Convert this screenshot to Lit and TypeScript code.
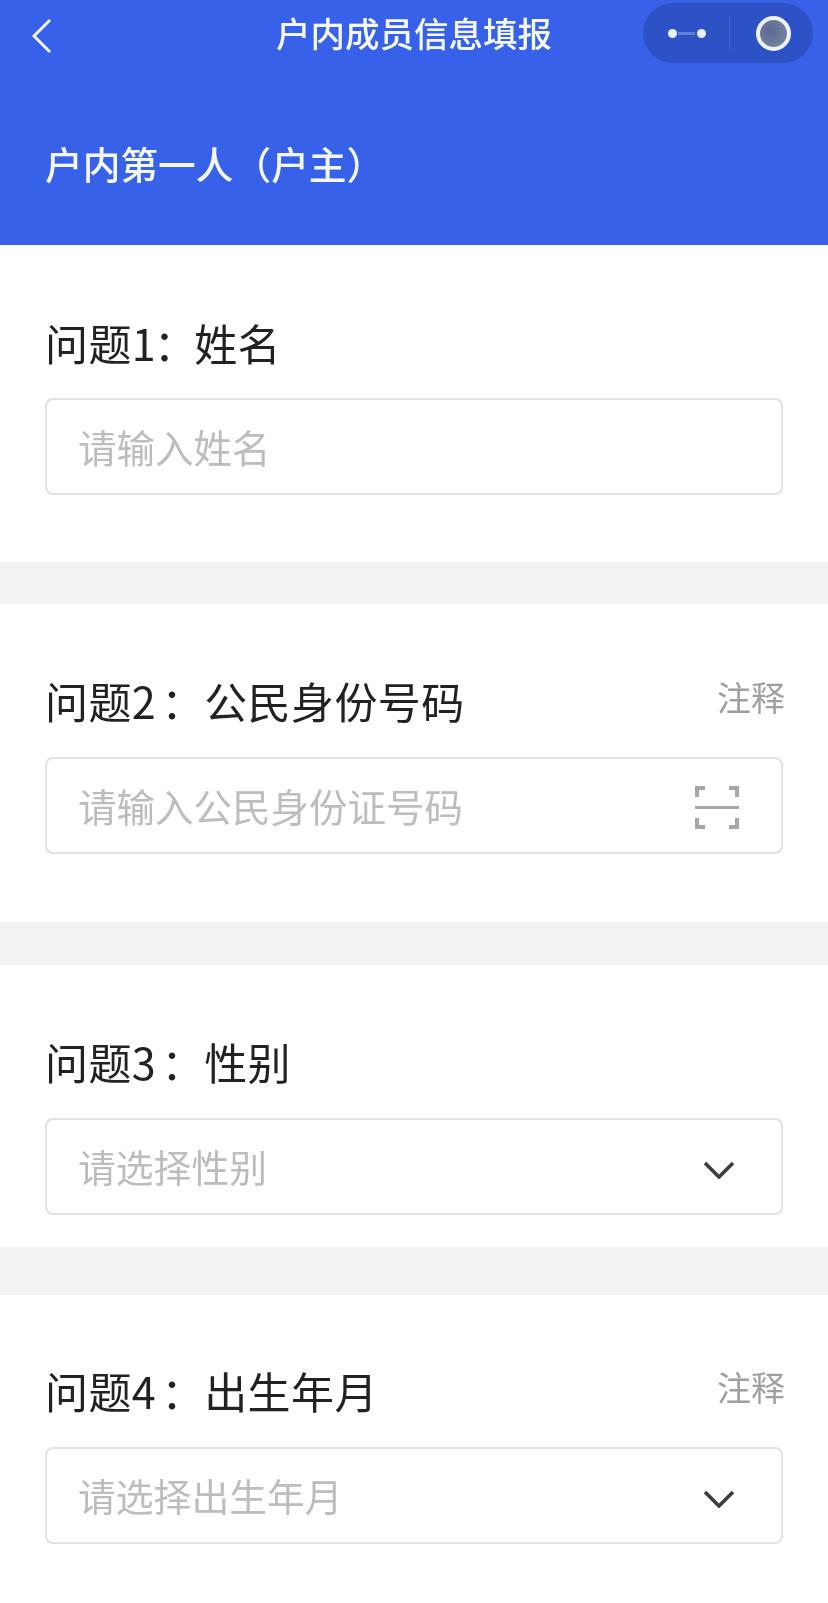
import { LitElement, html, css, svg } from "lit";
import { customElement } from "lit/decorators.js";

const chevron = svg`<svg class="ico-chev" viewBox="0 0 32 18" width="32" height="18" fill="none"><path d="M2 2 L16 16 L30 2" stroke="#3d3d3d" stroke-width="3.6"/></svg>`;
const scan = svg`<svg class="ico-scan" viewBox="0 0 44 43" width="44" height="43" fill="none" stroke="#a6a6a6" stroke-width="4">
  <path d="M2 11 V2 H10"/><path d="M34 2 H42 V11"/><path d="M2 32 V41 H10"/><path d="M34 41 H42 V32"/>
  <path d="M0 21.5 H44" stroke-width="3"/></svg>`;

@customElement("app-root")
export class AppRoot extends LitElement {
  static styles = css`
    :host {
      display: block;
      width: 828px;
      height: 1603px;
      background: #fff;
      overflow: hidden;
      font-family: "Noto Sans CJK SC", "Liberation Sans", sans-serif;
      filter: blur(0.55px);
    }
    .head {
      position: relative;
      height: 245px;
      box-sizing: border-box;
      background: #3761e8;
      color: #f4f7ff;
      display: flex;
      flex-direction: column;
    }
    .nav {
      height: 68px;
      display: flex;
      align-items: center;
      justify-content: center;
      font-size: 34.5px;
      font-weight: 500;
      line-height: 62px;
    }
    .nav span { display: block; margin-top: -4px; }
    .back { position: absolute; left: 31px; top: 18px; }
    .capsule {
      position: absolute;
      left: 643px;
      top: 3px;
      width: 170px;
      height: 60px;
      border-radius: 30px;
      background: #2d52c6;
      display: flex;
      align-items: center;
    }
    .dots {
      position: relative;
      width: 85px;
      display: flex;
      justify-content: center;
      gap: 20px;
      margin-left: 1px;
    }
    .dots::before {
      content: "";
      position: absolute;
      left: 34px;
      right: 34px;
      top: 3px;
      height: 3px;
      background: #5f7fdd;
    }
    .dot { position: relative; width: 9px; height: 9px; border-radius: 50%; background: #e8eeff; }
    .sep { width: 1px; height: 34px; background: #3f63d2; }
    .ring-wrap { flex: 1; display: flex; justify-content: center; padding-left: 3px; }
    .ring {
      width: 27px;
      height: 27px;
      border: 4px solid #eef3ff;
      border-radius: 50%;
      background: radial-gradient(circle at 40% 40%, #59688f, #7f8cab);
    }
    .sub {
      margin: 66px 0 0 45px;
      font-size: 37.7px;
      font-weight: 500;
      line-height: 58px;
      white-space: nowrap;
    }
    .sec { padding: 69px 45px 68px 45px; }
    .sec.first { padding-top: 70px; padding-bottom: 67px; }
    .sec.tight { padding-bottom: 32px; }
    .sec.last { padding-top: 68px; padding-bottom: 0; }
    .band { height: 42px; background: #f2f2f2; }
    .band.mid { height: 43px; }
    .band.wide { height: 48px; }
    .row {
      height: 60px;
      display: flex;
      justify-content: space-between;
      align-items: flex-start;
      margin-bottom: 24px;
    }
    .first .row { margin-bottom: 23px; }
    .q {
      font-size: 43px;
      line-height: 54px;
      color: #222;
      white-space: nowrap;
      letter-spacing: 0.4px;
    }
    .num { letter-spacing: 5.5px; }
    .colon { letter-spacing: 0; }
    .first .q { line-height: 55px; }
    .first .num { letter-spacing: -2px; }
    .first .colon { letter-spacing: -2.5px; }
    .note {
      font-size: 34px;
      line-height: 47px;
      color: #a0a0a0;
      margin-right: -2px;
    }
    .field {
      height: 97px;
      box-sizing: border-box;
      border: 2px solid #e2e2e2;
      border-radius: 8px;
      display: flex;
      align-items: center;
      justify-content: space-between;
      padding: 0 30px 0 31px;
    }
    .ph {
      font-size: 38.5px;
      line-height: 54px;
      margin-top: -1px;
      color: #bdbdbd;
      white-space: nowrap;
    }
    .ph.sel { font-size: 37.8px; }
    .ico-scan { display: block; margin: 3px 12px 0 0; }
    .ico-chev { display: block; margin: 7px 16px 0 0; }
  `;

  private section(
    num: string,
    title: string,
    ph: string,
    opts: { note?: boolean; icon?: unknown; cls?: string; sel?: boolean } = {}
  ) {
    return html`<section class="sec ${opts.cls ?? ""}">
      <div class="row">
        <span class="q">问题<span class="num">${num}</span><span class="colon">：</span>${title}</span>
        ${opts.note ? html`<span class="note">注释</span>` : ""}
      </div>
      <div class="field">
        <span class="ph ${opts.sel ? "sel" : ""}">${ph}</span>
        ${opts.icon ?? ""}
      </div>
    </section>`;
  }

  render() {
    return html`
      <header class="head">
        <div class="nav"><span>户内成员信息填报</span></div>
        <svg class="back" width="22" height="36" viewBox="0 0 22 36" fill="none">
          <path d="M19 2 L3 18 L19 34" stroke="#f0f4ff" stroke-width="3"/>
        </svg>
        <div class="capsule">
          <div class="dots"><span class="dot"></span><span class="dot"></span></div>
          <span class="sep"></span>
          <div class="ring-wrap"><span class="ring"></span></div>
        </div>
        <div class="sub">户内第一人（户主）</div>
      </header>
      ${this.section("1", "姓名", "请输入姓名", { cls: "first" })}
      <div class="band"></div>
      ${this.section("2", "公民身份号码", "请输入公民身份证号码", { note: true, icon: scan })}
      <div class="band mid"></div>
      ${this.section("3", "性别", "请选择性别", { icon: chevron, cls: "tight", sel: true })}
      <div class="band wide"></div>
      ${this.section("4", "出生年月", "请选择出生年月", { note: true, icon: chevron, cls: "last", sel: true })}
    `;
  }
}
